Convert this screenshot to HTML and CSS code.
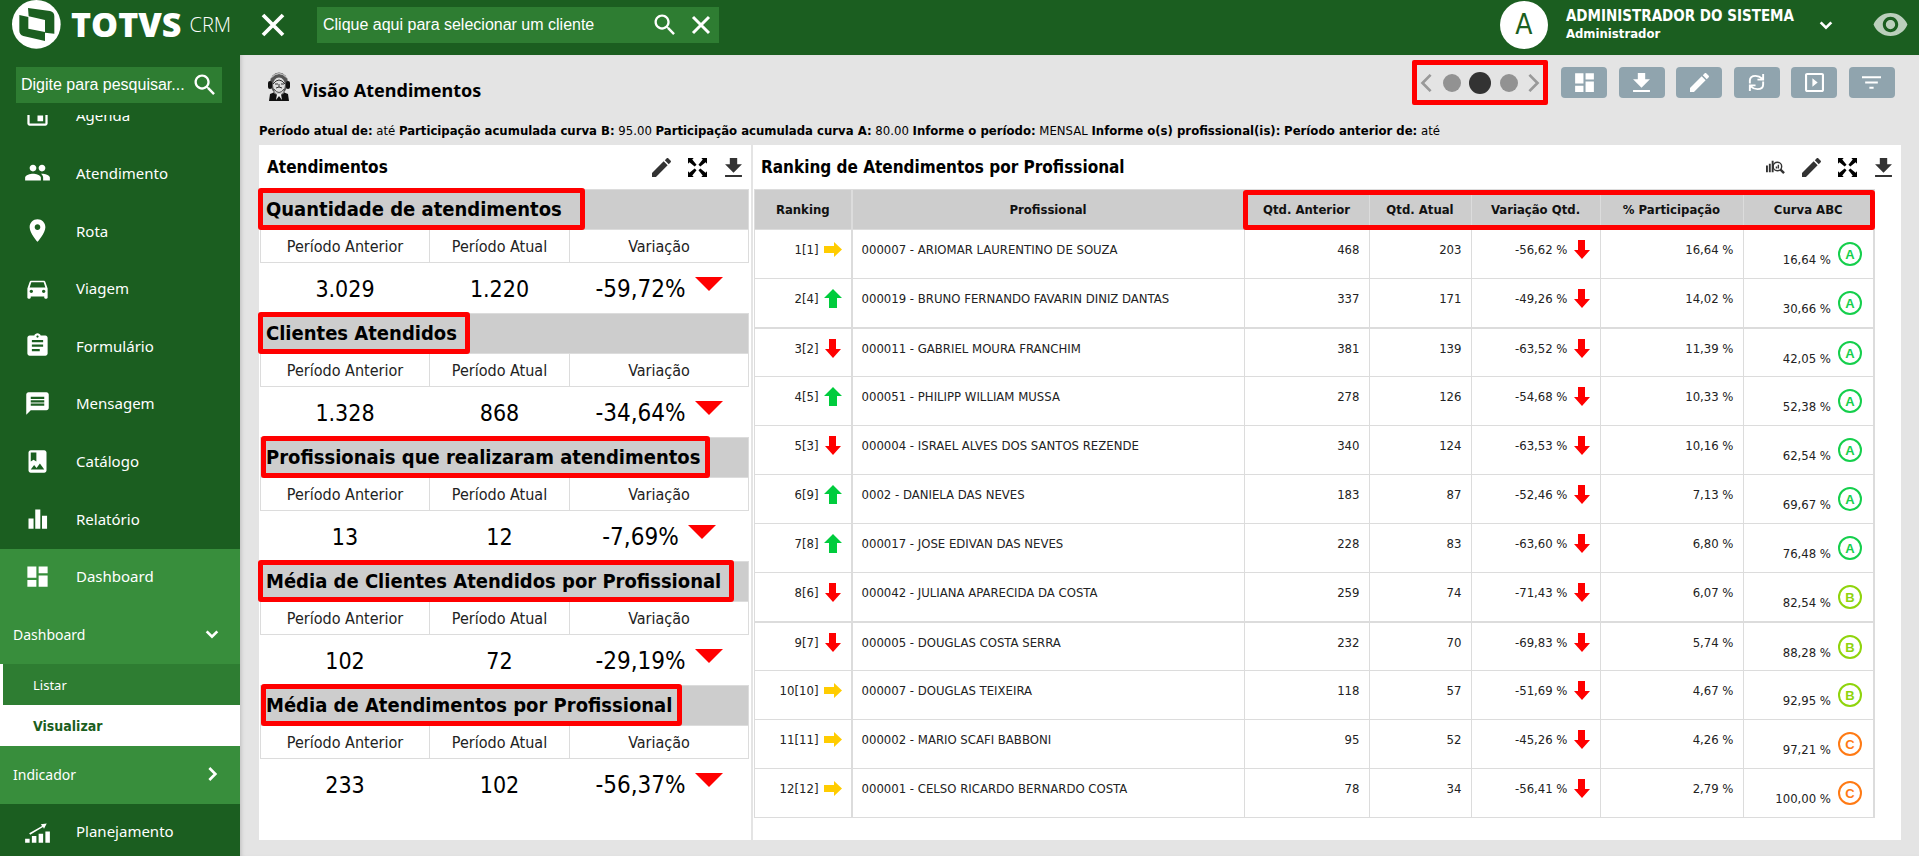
FILE: index.html
```html
<!DOCTYPE html>
<html lang="pt-BR">
<head>
  <meta charset="UTF-8" />
  <meta name="viewport" content="width=device-width, initial-scale=1.0"/>
  <title>TOTVS CRM - Visão Atendimentos</title>
  <link rel="stylesheet" href="styles.css">
</head>
<body>
  <!-- Icons -->
  <svg class="sprite" aria-hidden="true">
    <symbol id="i-event" viewBox="0 0 24 24"><path d="M17 12h-5v5h5v-5zM16 1v2H8V1H6v2H5c-1.11 0-1.99.9-1.99 2L3 19c0 1.1.89 2 2 2h14c1.1 0 2-.9 2-2V5c0-1.1-.9-2-2-2h-1V1h-2zm3 18H5V8h14v11z"/></symbol>
    <symbol id="i-people" viewBox="0 0 24 24"><path d="M16 11c1.66 0 2.99-1.34 2.99-3S17.66 5 16 5c-1.66 0-3 1.34-3 3s1.34 3 3 3zm-8 0c1.66 0 2.99-1.34 2.99-3S9.66 5 8 5C6.34 5 5 6.34 5 8s1.34 3 3 3zm0 2c-2.33 0-7 1.17-7 3.5V19h14v-2.5c0-2.33-4.67-3.5-7-3.5zm8 0c-.29 0-.62.02-.97.05 1.16.84 1.97 1.97 1.97 3.45V19h6v-2.5c0-2.33-4.67-3.5-7-3.5z"/></symbol>
    <symbol id="i-place" viewBox="0 0 24 24"><path d="M12 2C8.13 2 5 5.13 5 9c0 5.25 7 13 7 13s7-7.75 7-13c0-3.87-3.13-7-7-7zm0 9.5c-1.38 0-2.5-1.12-2.5-2.5s1.12-2.5 2.5-2.5 2.5 1.12 2.5 2.5-1.12 2.5-2.5 2.5z"/></symbol>
    <symbol id="i-car" viewBox="0 0 24 24"><path d="M18.92 6.01C18.72 5.42 18.16 5 17.5 5h-11c-.66 0-1.21.42-1.42 1.01L3 12v8c0 .55.45 1 1 1h1c.55 0 1-.45 1-1v-1h12v1c0 .55.45 1 1 1h1c.55 0 1-.45 1-1v-8l-2.08-5.99zM6.5 16c-.83 0-1.5-.67-1.5-1.5S5.67 13 6.5 13s1.5.67 1.5 1.5S7.33 16 6.5 16zm11 0c-.83 0-1.5-.67-1.5-1.5s.67-1.5 1.5-1.5 1.5.67 1.5 1.5-.67 1.5-1.5 1.5zM5 11l1.5-4.5h11L19 11H5z"/></symbol>
    <symbol id="i-form" viewBox="0 0 24 24"><path d="M19 3h-4.18C14.4 1.84 13.3 1 12 1c-1.3 0-2.4.84-2.82 2H5c-1.1 0-2 .9-2 2v14c0 1.1.9 2 2 2h14c1.1 0 2-.9 2-2V5c0-1.1-.9-2-2-2zm-7 0c.55 0 1 .45 1 1s-.45 1-1 1-1-.45-1-1 .45-1 1-1zm2 14H7v-2h7v2zm3-4H7v-2h10v2zm0-4H7V7h10v2z"/></symbol>
    <symbol id="i-chat" viewBox="0 0 24 24"><path d="M20 2H4c-1.1 0-1.99.9-1.99 2L2 22l4-4h14c1.1 0 2-.9 2-2V4c0-1.1-.9-2-2-2zm-2 12H6v-2h12v2zm0-3H6V9h12v2zm0-3H6V6h12v2z"/></symbol>
    <symbol id="i-album" viewBox="0 0 24 24"><path d="M18 2H6c-1.1 0-2 .9-2 2v16c0 1.1.9 2 2 2h12c1.1 0 2-.9 2-2V4c0-1.1-.9-2-2-2zM6 4h5v8l-2.5-1.5L6 12V4zm0 15l3-3.86 2.14 2.58 3-3.86L18 19H6z"/></symbol>
    <symbol id="i-bars" viewBox="0 0 24 24"><path d="M4 12h4.500v9H4zM10 4h4.500v17H10zM16 9.500h4.500V21H16z"/></symbol>
    <symbol id="i-dash" viewBox="0 0 24 24"><path d="M3 13h8V3H3v10zm0 8h8v-6H3v6zm10 0h8V11h-8v10zm0-18v6h8V3h-8z"/></symbol>
    <symbol id="i-plan" viewBox="0 0 24 24"><path d="M1 18.500h4V22H1zM7 16h4v6H7zM13 14h4v8h-4zM19 12h4v10h-4z"/><path d="M4.600 13.600L16 7.200 15 5.500l5.200-.6-2.400 4.700-.9-1.500L5.500 14.800z"/></symbol>
    <symbol id="i-search" viewBox="0 0 24 24"><path d="M15.500 14h-.79l-.28-.27C15.410 12.590 16 11.110 16 9.500 16 5.910 13.090 3 9.500 3S3 5.910 3 9.500 5.910 16 9.500 16c1.610 0 3.090-.59 4.230-1.570l.27.28v.79l5 4.990L20.490 19l-4.990-5zm-6 0C7.010 14 5 11.990 5 9.500S7.010 5 9.500 5 14 7.010 14 9.500 11.990 14 9.500 14z"/></symbol>
    <symbol id="i-close" viewBox="0 0 24 24"><path d="M4 4l16 16M20 4L4 20" fill="none" stroke="currentColor" stroke-width="3"/></symbol>
    <symbol id="i-down" viewBox="0 0 24 24"><path d="M4 8l8 8 8-8" fill="none" stroke="currentColor" stroke-width="4"/></symbol>
    <symbol id="i-right" viewBox="0 0 24 24"><path d="M8 3l9 9-9 9" fill="none" stroke="currentColor" stroke-width="4"/></symbol>
    <symbol id="i-prev" viewBox="0 0 20 20"><path d="M14 1l-9 9 9 9" fill="none" stroke="currentColor" stroke-width="3"/></symbol>
    <symbol id="i-next" viewBox="0 0 20 20"><path d="M6 1l9 9-9 9" fill="none" stroke="currentColor" stroke-width="3"/></symbol>
    <symbol id="i-eye" viewBox="0 0 24 24"><path d="M12 4.500C7 4.500 2.730 7.610 1 12c1.730 4.390 6 7.500 11 7.500s9.270-3.110 11-7.500c-1.730-4.390-6-7.500-11-7.500zM12 17c-2.760 0-5-2.240-5-5s2.240-5 5-5 5 2.240 5 5-2.240 5-5 5zm0-8c-1.660 0-3 1.340-3 3s1.340 3 3 3 3-1.340 3-3-1.340-3-3-3z"/></symbol>
    <symbol id="i-edit" viewBox="3 3 18 18"><path d="M3 17.250V21h3.750L17.810 9.940l-3.750-3.750L3 17.250zM20.710 7.040c.39-.39.39-1.020 0-1.410l-2.340-2.340c-.39-.39-1.020-.39-1.410 0l-1.830 1.830 3.750 3.750 1.830-1.830z"/></symbol>
    <symbol id="i-download" viewBox="3 3 18 18"><path d="M20 9h-4.500V3h-7v6H4l8 8 8-8zM4 19v2h16v-2H4z"/></symbol>
    <symbol id="i-expand" viewBox="0 0 20 20"><path d="M0 0h6L4.500 1.500 9 7 7 9 1.500 4.500 0 6zM20 0v6l-1.500-1.500L13 9l-2-2 4.500-5.500L14 0zM0 20v-6l1.500 1.500L7 11l2 2-4.500 5.500L6 20zM20 20h-6l1.500-1.500L11 13l2-2 5.500 4.500L20 14z"/></symbol>
    <symbol id="i-sync" viewBox="0 0 20 20"><path d="M3 11V8q0-5 6-5 4 0 7 3M17 9v3q0 5-6 5-4 0-7-3M17 1v6h-6M3 19v-6h6" fill="none" stroke="currentColor" stroke-width="2"/></symbol>
    <symbol id="i-slide" viewBox="3 3 18 18"><path d="M10 8v8l5-4-5-4zm9-5H5c-1.100 0-2 .9-2 2v14c0 1.100.9 2 2 2h14c1.100 0 2-.9 2-2V5c0-1.100-.9-2-2-2zm0 16H5V5h14v14z"/></symbol>
    <symbol id="i-filter" viewBox="3 3 18 18"><path d="M10 18h4v-2h-4v2zM3 6v2h18V6H3zm3 7h12v-2H6v2z"/></symbol>
    <symbol id="i-chart" viewBox="0 0 20 16"><path d="M0 6h2v7H0zM3 4h2v9H3zM6 1h2v12H6z"/><g fill="none" stroke="currentColor"><circle cx="12" cy="7" r="4.500" stroke-width="1.500"/><path d="M11 9V7M13 9V5" stroke-width="1.500"/><path d="M15 10l4 4" stroke-width="2.500"/></g></symbol>
    <symbol id="a-up" viewBox="0 0 18 19"><path d="M9 0l9 9h-5v10H5V9H0z"/></symbol>
    <symbol id="a-down" viewBox="0 0 18 19"><path d="M5 0h7v10h5l-8 9-8-9h4z"/></symbol>
    <symbol id="a-same" viewBox="0 0 18 19"><path d="M0 6h10V2l8 7.500-8 7.500v-4H0z"/></symbol>
  </svg>

  <!-- Top bar -->
  <header class="topbar">
    <a class="brand" href="#">
      <svg class="brand-mark" viewBox="36 0 147 147" aria-hidden="true">
        <circle cx="109" cy="73" r="73" fill="#fff"/>
        <path d="M84 24L150 33Q163 36 163 49V101L135 98V60L86 49zM58 45L85 51V86L135 96V123L70 108Q58 104 58 92z" fill="#1b5e20"/>
      </svg>
      <span class="brand-name">TOTVS</span>
      <span class="brand-product">CRM</span>
    </a>
    <button class="menu-toggle" type="button" aria-label="Fechar menu"><svg><use href="#i-close"/></svg></button>
    <div class="client-search">
      <input type="text" aria-label="Cliente" placeholder="Clique aqui para selecionar um cliente">
      <button type="button" aria-label="Pesquisar cliente"><svg><use href="#i-search"/></svg></button>
      <button type="button" aria-label="Limpar cliente"><svg class="clear"><use href="#i-close"/></svg></button>
    </div>
    <div class="user">
      <span class="avatar">A</span>
      <div class="user-info">
        <div class="user-name">ADMINISTRADOR DO SISTEMA</div>
        <div>Administrador</div>
      </div>
      <button class="user-more" type="button" aria-label="Opções do usuário"><svg><use href="#i-down"/></svg></button>
      <button class="user-eye" type="button" aria-label="Visualizar como"><svg><use href="#i-eye"/></svg></button>
    </div>
  </header>

  <div class="layout">
    <!-- Sidebar -->
    <aside class="sidebar">
      <div class="menu-search">
        <input type="text" aria-label="Pesquisar no menu" placeholder="Digite para pesquisar...">
        <button type="button" aria-label="Pesquisar"><svg><use href="#i-search"/></svg></button>
      </div>
      <nav class="menu">
        <div class="menu-list">
          <a href="#"><svg><use href="#i-event"/></svg>Agenda</a>
          <a href="#"><svg><use href="#i-people"/></svg>Atendimento</a>
          <a href="#"><svg><use href="#i-place"/></svg>Rota</a>
          <a href="#"><svg><use href="#i-car"/></svg>Viagem</a>
          <a href="#"><svg><use href="#i-form"/></svg>Formulário</a>
          <a href="#"><svg><use href="#i-chat"/></svg>Mensagem</a>
          <a href="#"><svg><use href="#i-album"/></svg>Catálogo</a>
          <a href="#"><svg><use href="#i-bars"/></svg>Relatório</a>
        </div>
        <div class="menu-open">
          <a class="menu-item" href="#"><svg><use href="#i-dash"/></svg>Dashboard</a>
          <a class="menu-group" href="#">Dashboard<svg><use href="#i-down"/></svg></a>
          <a class="menu-sub" href="#">Listar</a>
          <a class="menu-sub current" href="#">Visualizar</a>
          <a class="menu-group" href="#">Indicador<svg><use href="#i-right"/></svg></a>
        </div>
        <a class="menu-item" href="#"><svg><use href="#i-plan"/></svg>Planejamento</a>
      </nav>
    </aside>

    <!-- Dashboard -->
    <main class="content">
      <div class="page-head">
        <svg class="page-icon" viewBox="0 0 24 30" aria-hidden="true">
          <path d="M2 29l1-7 5-2 4 3 4-3 5 2 1 7z" fill="#111"/>
          <ellipse cx="12" cy="11" rx="9" ry="10.500" fill="#555"/>
          <path d="M3 7q9-11 18 0M5 5q7-7 14 0" fill="none" stroke="#bbb"/>
          <ellipse cx="12" cy="13" rx="6" ry="7.500" fill="#ddd"/>
          <path d="M6 12q6-8 12 0M8 12h3M14 12h3M9 16q3-2 6 0M12 12v3" fill="none" stroke="#333"/>
          <path d="M7 17q5 7 10 0v4l-5 3-5-3z" fill="#ccc" stroke="#555"/>
          <rect x="1" y="9" width="4" height="8" rx="2" fill="#111"/><rect x="19" y="9" width="4" height="8" rx="2" fill="#111"/>
          <path d="M10 22h4l1 6-3-4-3 4z" fill="#eee"/>
        </svg>
        <h1>Visão Atendimentos</h1>
        <div class="pager">
          <button type="button" aria-label="Anterior"><svg><use href="#i-prev"/></svg></button>
          <button class="dot" type="button" aria-label="Página 1"></button>
          <button class="dot active" type="button" aria-label="Página 2"></button>
          <button class="dot" type="button" aria-label="Página 3"></button>
          <button type="button" aria-label="Próxima"><svg><use href="#i-next"/></svg></button>
        </div>
        <div class="toolbar">
          <button type="button" aria-label="Dashboards"><svg><use href="#i-dash"/></svg></button>
          <button type="button" aria-label="Exportar"><svg><use href="#i-download"/></svg></button>
          <button type="button" aria-label="Editar"><svg><use href="#i-edit"/></svg></button>
          <button type="button" aria-label="Atualizar"><svg><use href="#i-sync"/></svg></button>
          <button type="button" aria-label="Apresentação"><svg><use href="#i-slide"/></svg></button>
          <button type="button" aria-label="Filtrar"><svg><use href="#i-filter"/></svg></button>
        </div>
      </div>

      <p class="params"><b>Período atual de:</b> até <b>Participação acumulada curva B:</b> 95.00 <b>Participação acumulada curva A:</b> 80.00 <b>Informe o período:</b> MENSAL <b>Informe o(s) profissional(is):</b> <b>Período anterior de:</b> até</p>

      <div class="panels">
        <section class="panel">
          <div class="panel-head">
            <h2>Atendimentos</h2>
            <button type="button" aria-label="Editar"><svg><use href="#i-edit"/></svg></button>
            <button class="dark" type="button" aria-label="Expandir"><svg><use href="#i-expand"/></svg></button>
            <button type="button" aria-label="Exportar"><svg><use href="#i-download"/></svg></button>
          </div>
          <table class="summary">
            <colgroup><col class="s-prev"><col class="s-cur"><col class="s-var"></colgroup>
            <tbody id="summary"></tbody>
          </table>
        </section>

        <section class="panel">
          <div class="panel-head">
            <h2>Ranking de Atendimentos por Profissional</h2>
            <button type="button" aria-label="Analisar"><svg><use href="#i-chart"/></svg></button>
            <button type="button" aria-label="Editar"><svg><use href="#i-edit"/></svg></button>
            <button class="dark" type="button" aria-label="Expandir"><svg><use href="#i-expand"/></svg></button>
            <button type="button" aria-label="Exportar"><svg><use href="#i-download"/></svg></button>
          </div>
          <div class="ranking-wrap">
            <table class="ranking">
              <colgroup><col class="r-rank"><col class="r-name"><col class="r-prev"><col class="r-cur"><col class="r-var"><col class="r-part"><col class="r-abc"></colgroup>
              <thead>
                <tr>
                  <th>Ranking</th><th>Profissional</th><th>Qtd. Anterior</th><th>Qtd. Atual</th><th>Variação Qtd.</th><th>% Participação</th><th>Curva ABC</th>
                </tr>
              </thead>
              <tbody id="ranking"></tbody>
            </table>
            <div class="head-mark"></div>
          </div>
        </section>
      </div>
    </main>
  </div>

  <script>
    const summary = [
      ['Quantidade de atendimentos', '3.029', '1.220', '-59,72%', 'wide'],
      ['Clientes Atendidos', '1.328', '868', '-34,64%', ''],
      ['Profissionais que realizaram atendimentos', '13', '12', '-7,69%', 'tight'],
      ['Média de Clientes Atendidos por Profissional', '102', '72', '-29,19%', ''],
      ['Média de Atendimentos por Profissional', '233', '102', '-56,37%', 'tight']
    ];

    const ranking = [
      ['1[1]', 'same', '000007 - ARIOMAR LAURENTINO DE SOUZA', 468, 203, '-56,62', '16,64', '16,64', 'A'],
      ['2[4]', 'up', '000019 - BRUNO FERNANDO FAVARIN DINIZ DANTAS', 337, 171, '-49,26', '14,02', '30,66', 'A'],
      ['3[2]', 'down', '000011 - GABRIEL MOURA FRANCHIM', 381, 139, '-63,52', '11,39', '42,05', 'A'],
      ['4[5]', 'up', '000051 - PHILIPP WILLIAM MUSSA', 278, 126, '-54,68', '10,33', '52,38', 'A'],
      ['5[3]', 'down', '000004 - ISRAEL ALVES DOS SANTOS REZENDE', 340, 124, '-63,53', '10,16', '62,54', 'A'],
      ['6[9]', 'up', '0002 - DANIELA DAS NEVES', 183, 87, '-52,46', '7,13', '69,67', 'A'],
      ['7[8]', 'up', '000017 - JOSE EDIVAN DAS NEVES', 228, 83, '-63,60', '6,80', '76,48', 'A'],
      ['8[6]', 'down', '000042 - JULIANA APARECIDA DA COSTA', 259, 74, '-71,43', '6,07', '82,54', 'B'],
      ['9[7]', 'down', '000005 - DOUGLAS COSTA SERRA', 232, 70, '-69,83', '5,74', '88,28', 'B'],
      ['10[10]', 'same', '000007 - DOUGLAS TEIXEIRA', 118, 57, '-51,69', '4,67', '92,95', 'B'],
      ['11[11]', 'same', '000002 - MARIO SCAFI BABBONI', 95, 52, '-45,26', '4,26', '97,21', 'C'],
      ['12[12]', 'same', '000001 - CELSO RICARDO BERNARDO COSTA', 78, 34, '-56,41', '2,79', '100,00', 'C']
    ];

    function arrow(dir) {
      return `<svg class="arrow ${dir}"><use href="#a-${dir}"/></svg>`;
    }

    document.getElementById('summary').innerHTML = summary.map(([title, prev, cur, diff, mark]) => `
      <tr class="s-title"><th colspan="3"><span class="mark ${mark}">${title}</span></th></tr>
      <tr class="s-head"><th>Período Anterior</th><th>Período Atual</th><th>Variação</th></tr>
      <tr class="s-values"><td>${prev}</td><td>${cur}</td><td><div class="diff">${diff}<span class="fall"></span></div></td></tr>
    `).join('');

    document.getElementById('ranking').innerHTML = ranking.map(r => `
      <tr>
        <td><div class="cell">${r[0]}${arrow(r[1])}</div></td>
        <td>${r[2]}</td>
        <td>${r[3]}</td>
        <td>${r[4]}</td>
        <td><div class="cell">${r[5]} %${arrow('down')}</div></td>
        <td>${r[6]} %</td>
        <td><div class="cell abc">${r[7]} %<span class="badge ${r[8]}">${r[8]}</span></div></td>
      </tr>
    `).join('');
  </script>
</body>
</html>
```
FILE: styles.css
```css
* {
  box-sizing: border-box;
}
body {
  margin: 0;
  height: 100vh;
  overflow: hidden;
  display: flex;
  flex-direction: column;
  background: #e4e4e4;
  color: #000;
  font-family: "DejaVu Sans Condensed", "Noto Sans", sans-serif;
  font-size: 13px;
}
.sprite {
  display: none;
}
svg {
  fill: currentColor;
}
a {
  color: inherit;
  text-decoration: none;
}
button {
  display: flex;
  align-items: center;
  justify-content: center;
  padding: 0;
  border: none;
  background: none;
  color: inherit;
  font-family: inherit;
  cursor: pointer;
}
input {
  flex: 1;
  min-width: 0;
  padding: 0;
  border: none;
  outline: none;
  background: none;
  color: #fff;
  font-family: "Liberation Sans", sans-serif;
  font-size: 16px;
}
input::placeholder {
  color: #fff;
  opacity: 1;
}

/* top bar */
.topbar {
  display: flex;
  align-items: center;
  flex: none;
  height: 55px;
  padding: 0 10px 6px 12px;
  background: #1b5e20;
  color: #fff;
}
.brand {
  display: flex;
  align-items: center;
  width: 246px;
}
.brand-mark {
  width: 49px;
  height: 49px;
  margin-right: 10px;
}
.brand-name {
  font-family: "Open Sans", sans-serif;
  font-size: 34px;
  font-weight: 800;
  line-height: 49px;
}
.brand-product {
  margin-left: 8px;
  font-family: "Open Sans", sans-serif;
  font-size: 20px;
  font-weight: 300;
}
.menu-toggle svg {
  width: 30px;
  height: 30px;
}
.client-search {
  display: flex;
  align-items: center;
  width: 402px;
  height: 36px;
  margin-left: 29px;
  padding-left: 6px;
  background: #2e7d32;
}
.client-search button {
  width: 36px;
}
.client-search svg {
  width: 28px;
  height: 28px;
}
.client-search .clear {
  width: 24px;
  height: 24px;
}
.user {
  display: flex;
  align-items: center;
  margin-left: auto;
}
.avatar {
  display: flex;
  align-items: center;
  justify-content: center;
  width: 48px;
  height: 48px;
  border-radius: 50%;
  background: #fff;
  color: #1b5e20;
  font-size: 28px;
}
.user-info {
  margin-left: 18px;
  font-weight: bold;
  line-height: 18px;
}
.user-name {
  font-size: 15px;
}
.user-more {
  margin-left: 24px;
}
.user-more svg {
  width: 16px;
  height: 16px;
}
.user-eye {
  margin-left: 38px;
  color: #bbcfbc;
}
.user-eye svg {
  width: 37px;
  height: 37px;
}

/* sidebar */
.layout {
  display: flex;
  flex: 1;
  min-height: 0;
}
.sidebar {
  display: flex;
  flex-direction: column;
  flex: none;
  width: 240px;
  background: #1b5e20;
  color: #fff;
  font-family: "Noto Sans", sans-serif;
  font-size: 15px;
}
.menu-search {
  display: flex;
  flex: none;
  height: 36px;
  margin: 12px 18px 12px 16px;
  padding: 0 3px 0 5px;
  background: #2e7d32;
}
.menu-search svg {
  width: 28px;
  height: 28px;
}
.menu {
  flex: 1;
  overflow: hidden;
}
.menu-list {
  display: grid;
  grid-auto-rows: 1fr;
  min-height: 461px;
  margin-top: -27px;
}
.menu-list a,
.menu-item {
  display: flex;
  align-items: center;
  gap: 25px;
  padding: 0 0 3px 24px;
}
.menu-item {
  height: 57px;
}
.menu-list svg,
.menu-item svg {
  width: 27px;
  height: 27px;
}
.menu-open {
  background: #388e3c;
}
.menu-group {
  display: flex;
  align-items: center;
  justify-content: space-between;
  height: 58px;
  padding: 0 20px 2px 13px;
  font-size: 14px;
}
.menu-group svg {
  width: 16px;
  height: 16px;
}
.menu-sub {
  display: flex;
  align-items: center;
  height: 41px;
  padding-left: 30px;
  border-left: 3px solid #fff;
  background: #2e7d32;
  font-size: 13px;
}
.menu-sub.current {
  background: #fff;
  color: #1b5e20;
  font-family: "DejaVu Sans Condensed", sans-serif;
  font-size: 14px;
  font-weight: bold;
}

/* page head */
.content {
  display: flex;
  flex-direction: column;
  flex: 1;
  min-width: 0;
  padding: 0 18px 16px 19px;
  box-shadow: inset 4px 0 4px -3px #bbb;
}
.page-head {
  display: flex;
  align-items: center;
  height: 63px;
  padding: 0 6px 8px 8px;
}
.page-icon {
  width: 24px;
  height: 30px;
  margin: 8px 10px 0 0;
}
h1 {
  margin: 14px auto 0 0;
  font-family: "Noto Sans", sans-serif;
  font-size: 18px;
  line-height: 24px;
}
.pager {
  display: flex;
  align-items: center;
  justify-content: space-between;
  width: 136px;
  height: 45px;
  border: 5px solid #f00;
  border-radius: 2px;
  color: #999;
}
.pager svg {
  width: 20px;
  height: 18px;
}
.dot {
  width: 18px;
  height: 18px;
  border-radius: 50%;
  background: #929292;
}
.dot.active {
  width: 22px;
  height: 22px;
  margin: 0 3px;
  background: #333;
}
.toolbar {
  display: flex;
  justify-content: space-between;
  width: 334px;
  margin-left: 13px;
}
.toolbar button {
  width: 46px;
  height: 31px;
  border-radius: 4px;
  background: #90a4ae;
  color: #fff;
}
.toolbar svg {
  width: 19px;
  height: 19px;
}
.toolbar button:first-child svg {
  width: 25px;
  height: 25px;
}
.params {
  margin: 0;
  padding: 5px 0 7px;
  line-height: 15px;
}

/* panels */
.panels {
  display: grid;
  grid-template-columns: 3fr 7fr;
  gap: 2px;
  flex: 1;
  min-height: 0;
}
.panel {
  min-width: 0;
  background: #fff;
}
.panel-head {
  display: flex;
  align-items: center;
  gap: 17px;
  height: 44px;
  padding: 0 8px;
  color: #333;
}
.panel-head h2 {
  margin: 0 auto 0 0;
  color: #000;
  font-size: 17px;
}
.panel-head svg {
  width: 19px;
  height: 19px;
}
.panel-head .dark {
  color: #000;
}
table {
  border-collapse: collapse;
  table-layout: fixed;
}
th,
td {
  padding: 0;
  border: 1px solid #dcdcdc;
}

.summary {
  width: calc(100% - 3px);
  margin-left: 1px;
}
.s-cur {
  width: 140px;
}
.s-var {
  width: 179px;
}
.s-title th {
  height: 40px;
  padding: 0 0 2px 5px;
  background: #cdcdcd;
  font-size: 20px;
  text-align: left;
  white-space: nowrap;
}
.s-head th {
  height: 33px;
  color: #222;
  font-size: 16px;
  font-weight: normal;
}
.s-values td {
  height: 51px;
  padding-top: 2px;
  border: none;
  font-size: 23px;
  text-align: center;
}
.diff {
  display: flex;
  align-items: center;
  justify-content: center;
  gap: 9px;
  font-size: 24px;
}
.fall {
  margin-bottom: 10px;
  border: 14px solid transparent;
  border-top-color: #f00;
  border-bottom: 0;
}

/* red highlights */
.mark {
  position: relative;
}
.mark::after,
.head-mark {
  content: "";
  position: absolute;
  border: 5px solid #f00;
  border-radius: 3px;
}
.mark::after {
  inset: -9px -13px -9px -8px;
}
.mark.wide::after {
  right: -23px;
}
.mark.tight::after {
  left: -5px;
  right: -10px;
}
.head-mark {
  top: 1px;
  right: 0;
  width: 632px;
  height: 40px;
}

.ranking-wrap {
  position: relative;
  margin: 0 26px 0 1px;
}
.ranking {
  width: 100%;
  border-right: 2px solid #dcdcdc;
}
.r-rank {
  width: 97px;
}
.r-prev {
  width: 125px;
}
.r-cur {
  width: 102px;
}
.r-var {
  width: 129px;
}
.r-part {
  width: 143px;
}
.r-abc {
  width: 131px;
}
.ranking th {
  height: 40px;
  padding-bottom: 1px;
  background: #cdcdcd;
  color: #111;
}
.ranking td {
  height: 49px;
  padding: 10px 9px 0;
  color: #222;
  line-height: 19px;
  text-align: right;
  vertical-align: top;
}
.ranking td:nth-child(2) {
  text-align: left;
}
.ranking tr > :first-child {
  border-right-width: 2px;
}
.ranking tbody tr:nth-child(6n + 2) td {
  border-bottom-width: 2px;
}
.cell {
  display: flex;
  justify-content: flex-end;
  gap: 5px;
}
.arrow {
  width: 18px;
  height: 19px;
}
.arrow.up {
  color: #00cc3d;
}
.arrow.down {
  color: #f00;
}
.arrow.same {
  color: #fc0;
}
.abc {
  gap: 7px;
  margin-right: 2px;
  padding-top: 2px;
  line-height: 35px;
}
.badge {
  width: 24px;
  height: 24px;
  border: 2px solid;
  border-radius: 50%;
  font-family: "Liberation Sans", sans-serif;
  font-size: 13px;
  font-weight: bold;
  line-height: 21px;
  text-align: center;
}
.badge.A {
  color: #15cf4c;
}
.badge.B {
  color: #8fd40c;
}
.badge.C {
  color: #ff7a14;
}
```
